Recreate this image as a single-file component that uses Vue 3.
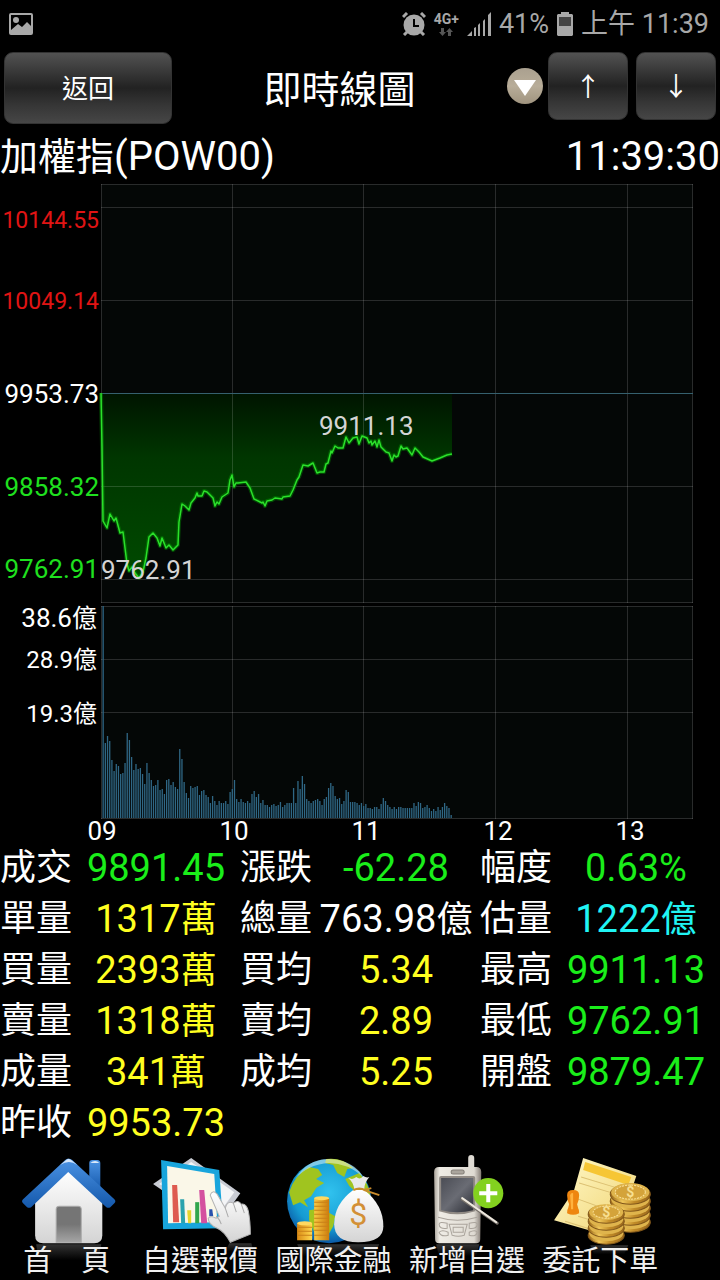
<template>
    <div class="screen">
        <div class="status">
            <svg class="status-picture" viewBox="0 0 24 22">
                <path fill-rule="evenodd" d="M2 0h20q2 0 2 2v18q0 2-2 2H2q-2 0-2-2V2q0-2 2-2zM2 2v15l7-6 4 3 5-5 4 4V2z" />
                <circle cx="7" cy="7" r="3" />
            </svg>
            <div class="status-right">
                <svg class="status-alarm" viewBox="0 0 24 24">
                    <circle cx="12" cy="13" r="10.5" />
                    <path class="ink" d="M1 5l4-4M23 5l-4-4M5 20l-3 3M19 20l3 3" />
                    <path class="hole" d="M12 7v7h5" />
                </svg>
                <div class="network">
                    <span>4G+</span>
                    <svg viewBox="0 0 14 8">
                        <path d="M2 0h3v4h2L3.500 8 0 4h2zM9 8h3V4h2L10.500 0 7 4h2z" />
                    </svg>
                </div>
                <svg class="status-signal" viewBox="0 0 24 24">
                    <path d="M0 24l5-5v5zM7 24v-8l2-1v9zM11 24V13l2-2v13zM16 24V9l2-2v17zM21 24V3l3-3v24z" />
                </svg>
                <span>41%</span>
                <svg class="status-battery" viewBox="0 0 16 24">
                    <path d="M4 0h8v2h3l1 1v20l-1 1H1l-1-1V3l1-1h3z" />
                    <path class="level" d="M2 5h12v9H2z" />
                </svg>
                <span>上午 11:39</span>
            </div>
        </div>

        <header class="header">
            <button type="button" class="btn back">返回</button>
            <h1>即時線圖</h1>
            <button type="button" class="picker" aria-label="選單">
                <svg viewBox="0 0 36 36">
                    <path d="M7 12h22L18 28z" fill="#fff" />
                </svg>
            </button>
            <div class="arrows">
                <button type="button" class="btn arrow">↑</button>
                <button type="button" class="btn arrow">↓</button>
            </div>
        </header>

        <div class="symbol">
            <span><span class="symbol-name">加權指</span>(POW00)</span>
            <span>11:39:30</span>
        </div>

        <svg class="chart" viewBox="0 0 720 662">
            <defs>
                <linearGradient id="areaFill" x1="0" y1="0" x2="0" y2="1">
                    <stop offset="0" stop-color="#001400" />
                    <stop offset="0.35" stop-color="#003600" />
                    <stop offset="1" stop-color="#004a00" />
                </linearGradient>
            </defs>

            <!-- price -->
            <g transform="translate(101 4)">
                <rect class="plot" width="592" height="419" />
                <path class="area" :d="areaPath" />
                <path class="grid" :d="priceGrid" />
                <path class="base" d="M0 209.500H592" />
                <polyline class="glow" :points="linePoints" />
                <polyline class="line" :points="linePoints" />
                <text class="mark" x="0" y="395">9762.91</text>
                <text class="mark" x="218" y="251">9911.13</text>
            </g>
            <text v-for="l in priceLabels" :key="l.text" x="99" :y="l.y" :class="['axis', l.tone]">{{ l.text }}</text>

            <!-- volume -->
            <g transform="translate(101 426)">
                <rect class="plot" width="592" height="213" />
                <path class="grid" :d="volumeGrid" />
                <rect v-for="(v, i) in volumes" :key="i" class="bar" :x="1.5 + i * minute" :y="212 - v" width="1.300"
                    :height="v" />
            </g>
            <text v-for="l in volumeLabels" :key="l.text" x="97" :y="l.y" :class="['axis', l.tone]">{{ l.text }}<tspan
                    :class="['unit', l.tone]">億</tspan></text>
            <text v-for="(h, i) in hours" :key="h" class="hour" :x="102 + i * 132" y="660">{{ h }}</text>
        </svg>

        <table class="quote">
            <tbody>
                <tr v-for="(row, r) in rows" :key="r">
                    <template v-for="c in row" :key="c.label">
                        <th scope="row">{{ c.label }}</th>
                        <td :class="c.tone">{{ c.value }}<span v-if="c.unit" class="unit-text">{{ c.unit }}</span></td>
                    </template>
                </tr>
            </tbody>
        </table>

        <nav class="nav">
            <a href="#home">
                <svg viewBox="0 0 133 100">
                    <defs>
                        <linearGradient id="roof" x1="0" y1="0" x2="0" y2="1">
                            <stop offset="0" stop-color="#4b93e4" />
                            <stop offset="1" stop-color="#1458ab" />
                        </linearGradient>
                        <linearGradient id="wall" x1="0" y1="0" x2="0" y2="1">
                            <stop offset="0" stop-color="#fff" />
                            <stop offset="1" stop-color="#d4d4d4" />
                        </linearGradient>
                        <linearGradient id="door" x1="0" y1="0" x2="0" y2="1">
                            <stop offset="0.5" stop-color="#757575" />
                            <stop offset="1" stop-color="#a5a5a5" />
                        </linearGradient>
                        <linearGradient id="mirror" x1="0" y1="0" x2="0" y2="1">
                            <stop offset="0" stop-color="#333" />
                            <stop offset="1" stop-color="#000" />
                        </linearGradient>
                    </defs>
                    <path d="M36 96h65l-3 16H39z" fill="url(#mirror)" />
                    <rect x="89" y="12" width="11" height="30" rx="3" fill="url(#roof)" />
                    <path d="M90 15q5-4 9 0z" fill="#dbeafa" />
                    <path d="M35 52l33-30 34 30v35q0 8-8 8H43q-8 0-8-8z" fill="url(#wall)" />
                    <path d="M56 94V61q0-3 3-3h19q3 0 3 3v33z" fill="url(#door)" stroke="#aaa" />
                    <path d="M65 12q3-3 7 0l42 39q2 2 0 4l-4 4q-2 1-4 0L68 24 31 59q-2 1-4 0l-4-4q-2-2 0-4z"
                        fill="url(#roof)" />
                    <path d="M60 17l6-5q2-2 5 0l6 5q-8-6-17 0z" fill="#d5e6fa" />
                </svg>
                <span>首　頁</span>
            </a>
            <a href="#quotes">
                <svg viewBox="0 0 133 100">
                    <path d="M58 10l49 35-24 34-63-43z" fill="#c9ccd4" />
                    <path d="M58 14l43 30-16 22-59-30z" fill="#f4f5f7" />
                    <path d="M28 12l58 10 4 58-60 1z" fill="#18a5dc" />
                    <path d="M34 18l47 8 3 48-49 1z" fill="#faf7e8" />
                    <path d="M39 37h5l2 37h-6z" fill="#de5b50" />
                    <path d="M47 51h4l1 24h-4z" fill="#2ba3ae" />
                    <path d="M54 62h4v13h-3z" fill="#e6d52e" />
                    <path d="M62 54h4v21h-4z" fill="#31a64d" />
                    <path d="M66 42h5l3 33h-6z" fill="#d4509f" />
                    <path d="M76 61h3l1 7h-4z" fill="#2851ad" />
                    <path d="M96 95h22l2 8H92z" fill="url(#mirror)" />
                    <path
                        d="M77 47q2-6 7-1l8 14q2-8 8-5 5-4 8 1 5-1 7 7 2 10 2 23l-20 8q-6-11-13-14-9-4-9-10 2-3 8 0l3-2z"
                        fill="url(#wall)" stroke="#b3b3b3" />
                    <path d="M92 60l3 9M100 55l3 9M108 56l3 9M83 68q4 4 5 8" fill="none" stroke="#aaa" />
                </svg>
                <span>自選報價</span>
            </a>
            <a href="#global">
                <svg viewBox="0 0 133 100">
                    <defs>
                        <radialGradient id="sea" cx="0.5" cy="0.4" r="0.6">
                            <stop offset="0" stop-color="#31c2ee" />
                            <stop offset="0.7" stop-color="#159bd2" />
                            <stop offset="1" stop-color="#0a58a5" />
                        </radialGradient>
                        <linearGradient id="gold">
                            <stop offset="0" stop-color="#d98a14" />
                            <stop offset="0.45" stop-color="#ffd64c" />
                            <stop offset="1" stop-color="#cc7b0c" />
                        </linearGradient>
                    </defs>
                    <path d="M30 96h82l-6 12H36z" fill="url(#mirror)" />
                    <circle cx="62" cy="53" r="42" fill="url(#sea)" />
                    <path
                        d="M22 44q5-16 20-25l9 2 4 6-6 4 8 4-8 5-5 8-7 4 4 7-8-5-7 3zM59 11q16-2 27 9l-6 1-3 8-7-4-4-8-8-2zM78 31l14-6q9 10 11 22l-13-2-8-7zM42 62l12-2 14 8-2 10-8 14-10-6-6-14z"
                        fill="#a0c41f" />
                    <path d="M28 31Q40 11 62 11q24 1 34 18-16-14-34-14-21 1-34 16z" fill="#fff" opacity="0.45" />
                    <path d="M30 75h15v17H30zM47 50h15v42H47z" fill="url(#gold)" />
                    <path d="M30 79h15M30 83h15M30 87h15M47 54h15M47 58h15M47 62h15M47 66h15M47 70h15M47 74h15M47 78h15M47 82h15M47 87h15"
                        stroke="#c98018" />
                    <ellipse cx="37.500" cy="75" rx="7.500" ry="2" fill="#ffd961" />
                    <ellipse cx="54.500" cy="50" rx="7.500" ry="2" fill="#ffd961" />
                    <path d="M81 30q5 2 8-1 4 3 7-1 3 2 6 1-5 6-5 12H87q-1-7-6-11z" fill="#e9e9e9" />
                    <path d="M86 42h11q19 15 19 36 0 16-25 16-24 0-24-18 0-20 19-34z" fill="url(#wall)" />
                    <path d="M86 42q6-3 12 0M96 42l8-2M97 42l15 5" fill="none" stroke="#c98b2c" stroke-width="2" />
                    <text x="91" y="77" class="dollar">$</text>
                </svg>
                <span>國際金融</span>
            </a>
            <a href="#add">
                <svg viewBox="0 0 133 100">
                    <defs>
                        <linearGradient id="shell">
                            <stop offset="0" stop-color="#a9a39a" />
                            <stop offset="0.12" stop-color="#efece5" />
                            <stop offset="0.85" stop-color="#dedad2" />
                            <stop offset="1" stop-color="#837b74" />
                        </linearGradient>
                        <linearGradient id="lcd" x1="0" y1="0" x2="1" y2="1">
                            <stop offset="0" stop-color="#4b4d55" />
                            <stop offset="0.5" stop-color="#6a6c74" />
                            <stop offset="1" stop-color="#292b33" />
                        </linearGradient>
                    </defs>
                    <path d="M36 96h43l-3 12H39z" fill="url(#mirror)" />
                    <rect x="68" y="7" width="6" height="18" rx="3" fill="#dedad3" />
                    <path d="M34 24q0-5 5-5h37q5 0 5 5l-1 67q0 4-4 4H39q-4 0-4-4z" fill="url(#shell)" />
                    <rect x="51" y="22" width="13" height="4" rx="2" fill="#aaa59d" stroke="#85807a" />
                    <path d="M39 30q0-2 2-2h32q2 0 2 2v33q-18 6-36 0z" fill="#918b85" />
                    <path d="M41 30h32v32q-16 4-32 0z" fill="url(#lcd)" />
                    <path
                        d="M38 69q19 6 39 0M39 76q0-3 8-1v5q-8 1-8-4zM69 75q8-2 8 1 0 5-8 4zM39 84q3-3 9 0v3q-7 2-9-3zM69 84q6-3 8 0-1 5-8 3zM49 76h18l-3 11q-6 2-12 0zM53 79h10v5H53z"
                        fill="none" stroke="#aaa49c" />
                    <circle cx="88" cy="45" r="15" fill="#83d11f" />
                    <path d="M88 36v18M79 45h18" stroke="#fff" stroke-width="4" />
                    <path d="M62 51l35 24" stroke="#756f69" stroke-width="3" stroke-linecap="round" />
                    <path d="M62 50l34 24" stroke="#eee9df" stroke-width="2" stroke-linecap="round" />
                </svg>
                <span>新增自選</span>
            </a>
            <a href="#order">
                <svg viewBox="0 0 133 100">
                    <defs>
                        <linearGradient id="coin">
                            <stop offset="0" stop-color="#966317" />
                            <stop offset="0.3" stop-color="#f0c759" />
                            <stop offset="0.6" stop-color="#c18b28" />
                            <stop offset="1" stop-color="#99671c" />
                        </linearGradient>
                        <linearGradient id="paper" x1="0" y1="0" x2="1" y2="1">
                            <stop offset="0" stop-color="#fff9c9" />
                            <stop offset="1" stop-color="#f0d371" />
                        </linearGradient>
                    </defs>
                    <path d="M56 97h38l-4 9H60z" fill="url(#mirror)" />
                    <path d="M49 10l53 18-12 36-14 24-56-16 20-30z" fill="url(#paper)" />
                    <path d="M51 14l46 15-3 8-45-15z" fill="#f6c634" />
                    <path d="M47 29l43 13M45 35l40 12M44 51l25 9M44 68l20 6M31 73l32 10" stroke="#dcc173" />
                    <path d="M33 47q0-5 6-5t6 5q0 5-2 9l1 4q1 1 1 5-6 3-12 0 0-4 1-5l1-4q-2-4-2-9z" fill="#ee8610" />
                    <path d="M36 47q1-3 3-2v16h-2z" fill="#ffb23e" />
                    <g v-for="n in 5" :key="'r' + n">
                        <ellipse cx="96" :cy="81 - n * 7" rx="20" ry="10" fill="url(#coin)" stroke="#80561a" />
                        <ellipse cx="96" :cy="79 - n * 7" rx="19" ry="9" fill="#dfb44c" />
                    </g>
                    <ellipse cx="96" cy="44" rx="15" ry="7" fill="#d4a33a" stroke="#fae19a" stroke-dasharray="2 1" />
                    <text x="96" y="49" class="coin-mark">$</text>
                    <g v-for="n in 4" :key="'l' + n">
                        <ellipse cx="72" :cy="94 - n * 7" rx="18" ry="9" fill="url(#coin)" stroke="#80561a" />
                        <ellipse cx="72" :cy="92 - n * 7" rx="17" ry="8" fill="#dfb44c" />
                    </g>
                    <ellipse cx="72" cy="64" rx="13" ry="6" fill="#d4a33a" stroke="#fae19a" stroke-dasharray="2 1" />
                    <text x="72" y="69" class="coin-mark">$</text>
                </svg>
                <span>委託下單</span>
            </a>
        </nav>
    </div>
</template>

<script setup>
import { computed } from 'vue';

// 270 trading minutes across the plot
const minute = 591 / 270;

const hours = ['09', '10', '11', '12', '13'];

const priceLabels = [
    { text: '10144.55', y: 48, tone: 'up' },
    { text: '10049.14', y: 129, tone: 'up' },
    { text: '9953.73', y: 223, tone: 'flat' },
    { text: '9858.32', y: 316, tone: 'down' },
    { text: '9762.91', y: 398, tone: 'down' }
];

const volumeLabels = [
    { text: '38.6', y: 447, tone: '' },
    { text: '28.9', y: 488, tone: 'small' },
    { text: '19.3', y: 542, tone: 'small' }
];

const price = [
    [0, 209], [1, 263], [2, 337], [6, 344], [9, 330], [13, 337], [15, 334], [19, 349], [22, 348], [26, 380],
    [28, 387], [31, 383], [34, 389], [38, 394], [42, 388], [45, 374], [48, 353], [52, 349], [56, 354], [59, 362],
    [61, 354], [65, 364], [68, 361], [72, 366], [77, 361], [78, 338], [81, 320], [84, 322], [88, 326], [90, 319],
    [94, 314], [96, 309], [97, 312], [101, 312], [103, 307], [106, 308], [112, 314], [114, 322], [116, 318],
    [118, 320], [121, 313], [127, 309], [129, 296], [131, 291], [133, 303], [135, 299], [137, 299], [145, 298],
    [149, 304], [153, 315], [161, 319], [162, 318], [164, 322], [166, 317], [171, 316], [174, 314], [181, 315],
    [182, 313], [189, 312], [192, 306], [196, 296], [198, 293], [202, 281], [207, 282], [212, 279], [216, 289],
    [219, 288], [223, 288], [225, 280], [227, 279], [230, 267], [231, 269], [234, 262], [237, 264], [242, 264],
    [245, 253], [248, 259], [252, 254], [256, 253], [258, 260], [261, 252], [266, 254], [268, 259], [270, 257],
    [271, 261], [274, 257], [276, 263], [278, 256], [280, 263], [285, 268], [288, 269], [291, 277], [293, 271],
    [295, 273], [297, 272], [300, 262], [302, 265], [306, 264], [311, 271], [314, 264], [318, 268], [322, 273],
    [331, 277], [339, 274], [346, 271], [351, 270]
];

const volumes = [
    212, 75, 82, 77, 58, 47, 54, 52, 44, 45, 55, 85, 78, 61, 48, 54, 49, 50, 44, 34,
    55, 45, 38, 32, 33, 38, 28, 29, 24, 38, 39, 33, 36, 31, 29, 69, 59, 36, 25, 20,
    32, 30, 31, 32, 23, 27, 28, 23, 21, 15, 22, 17, 13, 17, 15, 15, 17, 14, 26, 29,
    38, 19, 16, 19, 16, 15, 17, 15, 24, 27, 21, 24, 15, 18, 13, 13, 11, 13, 14, 12,
    13, 16, 11, 13, 15, 15, 15, 30, 15, 37, 29, 42, 34, 19, 17, 15, 17, 18, 19, 17,
    13, 19, 21, 30, 35, 32, 22, 19, 20, 14, 17, 28, 26, 16, 16, 16, 15, 13, 15, 12,
    14, 10, 10, 9, 11, 11, 9, 14, 20, 17, 13, 11, 9, 11, 9, 11, 11, 10, 10, 10,
    10, 10, 15, 12, 16, 15, 10, 11, 13, 10, 7, 9, 7, 11, 8, 11, 15, 12, 10, 3
];

const linePoints = computed(() => price.map((p) => p.join(',')).join(' '));
const areaPath = computed(() => `M0 209L${linePoints.value}L351 209Z`);

const columns = [0.5, 131.5, 262.5, 394.5, 526.5, 591.5];

const gridPath = (lines, height) => {
    return lines.map((y) => `M0 ${y}H592`).join('') + columns.map((x) => `M${x} 0V${height}`).join('');
};

const priceGrid = gridPath([0.5, 23.5, 116.5, 302.5, 395.5, 418.5], 419);
const volumeGrid = gridPath([0.5, 53.5, 106.5, 212.5], 213);

const rows = [
    [
        { label: '成交', value: '9891.45', tone: 'green' },
        { label: '漲跌', value: '-62.28', tone: 'green' },
        { label: '幅度', value: '0.63%', tone: 'green' }
    ],
    [
        { label: '單量', value: '1317', unit: '萬', tone: 'yellow' },
        { label: '總量', value: '763.98', unit: '億', tone: 'white' },
        { label: '估量', value: '1222', unit: '億', tone: 'cyan' }
    ],
    [
        { label: '買量', value: '2393', unit: '萬', tone: 'yellow' },
        { label: '買均', value: '5.34', tone: 'yellow' },
        { label: '最高', value: '9911.13', tone: 'green' }
    ],
    [
        { label: '賣量', value: '1318', unit: '萬', tone: 'yellow' },
        { label: '賣均', value: '2.89', tone: 'yellow' },
        { label: '最低', value: '9762.91', tone: 'green' }
    ],
    [
        { label: '成量', value: '341', unit: '萬', tone: 'yellow' },
        { label: '成均', value: '5.25', tone: 'yellow' },
        { label: '開盤', value: '9879.47', tone: 'green' }
    ],
    [
        { label: '昨收', value: '9953.73', tone: 'yellow' }
    ]
];
</script>

<style>
body {
    margin: 0;
    background: #000;
}
</style>

<style scoped>
.screen {
    min-height: 100vh;
    background: #000;
    color: #fff;
    font-family: Roboto, "Noto Sans CJK TC", sans-serif;
}

.status {
    display: flex;
    align-items: center;
    justify-content: space-between;
    height: 48px;
    padding: 0 11px 0 9px;
    color: #a8a8a8;
    font-size: 27px;
    line-height: 48px;
}

.status svg {
    display: block;
    fill: #a8a8a8;
}

.status-right {
    display: flex;
    align-items: center;
    gap: 8px;
}

.status-picture {
    width: 24px;
    height: 22px;
}

.status-alarm,
.status-signal {
    width: 24px;
    height: 24px;
}

.status-alarm .ink {
    fill: none;
    stroke: #a8a8a8;
    stroke-width: 3;
}

.status-alarm .hole {
    fill: none;
    stroke: #000;
    stroke-width: 2;
}

.network {
    display: flex;
    flex-direction: column;
    align-items: center;
    gap: 2px;
    font-size: 14px;
    font-weight: 700;
    line-height: 14px;
}

.network svg {
    width: 14px;
    height: 8px;
    fill: #555;
}

.status-battery {
    width: 16px;
    height: 24px;
}

.status-battery .level {
    fill: #444;
}

.header {
    display: flex;
    align-items: flex-start;
    height: 80px;
    padding: 4px 4px 0;
}

.btn {
    box-sizing: border-box;
    padding: 0 0 4px;
    border: 1px solid #333;
    border-radius: 9px;
    background: linear-gradient(#525252, #3a3a3a 25%, #222 50%, #363636 75%, #464646);
    color: #fff;
    font-family: inherit;
    font-size: 26px;
}

.back {
    width: 168px;
    height: 72px;
}

.arrows {
    display: flex;
    gap: 8px;
}

.arrow {
    width: 80px;
    height: 68px;
}

h1 {
    flex: 1;
    margin: 0;
    font-size: 38px;
    font-weight: 400;
    line-height: 76px;
    text-align: center;
}

.picker {
    width: 36px;
    height: 36px;
    margin: 16px 5px 0 0;
    padding: 0;
    border: 0;
    border-radius: 50%;
    background: linear-gradient(#aaa08f, #b8ad99 50%, #a0947f);
}

.picker svg {
    display: block;
}

.symbol {
    display: flex;
    justify-content: space-between;
    height: 48px;
    font-size: 40px;
    line-height: 50px;
}

.symbol-name {
    font-size: 38px;
}

.chart {
    display: block;
    width: 100%;
    overflow: visible;
    font-size: 26px;
}

.chart .plot {
    fill: #040706;
}

.chart .grid {
    fill: none;
    stroke: #fff;
    stroke-opacity: 0.15;
}

.chart .base {
    stroke: #35606e;
}

.chart .area {
    fill: url(#areaFill);
}

.chart .line {
    fill: none;
    stroke: #2be02b;
    stroke-width: 1.5;
    stroke-linejoin: round;
}

.chart .glow {
    fill: none;
    stroke: #00a000;
    stroke-opacity: 0.4;
    stroke-width: 4;
    stroke-linejoin: round;
}

.chart .bar {
    fill: #2f6785;
}

.chart .mark {
    fill: #d4d4d4;
}

.chart .axis {
    fill: #fff;
    text-anchor: end;
}

.chart .hour {
    fill: #fff;
    text-anchor: middle;
}

.chart .unit {
    font-size: 25px;
}

.chart .small {
    font-size: 24px;
}

.chart .up {
    fill: #e01414;
    font-size: 23px;
}

.chart .down {
    fill: #1fe01f;
}

.quote {
    width: 100%;
    border-collapse: collapse;
    table-layout: fixed;
}

.quote th,
.quote td {
    padding: 2px 0 0;
    line-height: 49px;
    white-space: nowrap;
    font-weight: 400;
    vertical-align: top;
}

.quote th {
    width: 10%;
    font-size: 36px;
    text-align: left;
}

.quote td {
    font-size: 38px;
    text-align: center;
}

.unit-text {
    font-size: 36px;
    line-height: 1;
}

.green {
    color: #1aee1a;
}

.yellow {
    color: #ffff20;
}

.white {
    color: #fff;
}

.cyan {
    color: #20f4f4;
}

.nav {
    display: flex;
    padding-right: 53px;
}

.nav a {
    flex: 1;
    color: #f0f0f0;
    font-size: 29px;
    line-height: 26px;
    text-align: center;
    text-decoration: none;
    white-space: nowrap;
}

.nav svg {
    display: block;
    width: 100%;
    overflow: visible;
}

.nav span {
    display: block;
    position: relative;
}

.dollar {
    fill: #d39036;
    font-size: 32px;
    text-anchor: middle;
}

.coin-mark {
    fill: #f7df91;
    font-size: 14px;
    font-weight: 700;
    text-anchor: middle;
}
</style>
